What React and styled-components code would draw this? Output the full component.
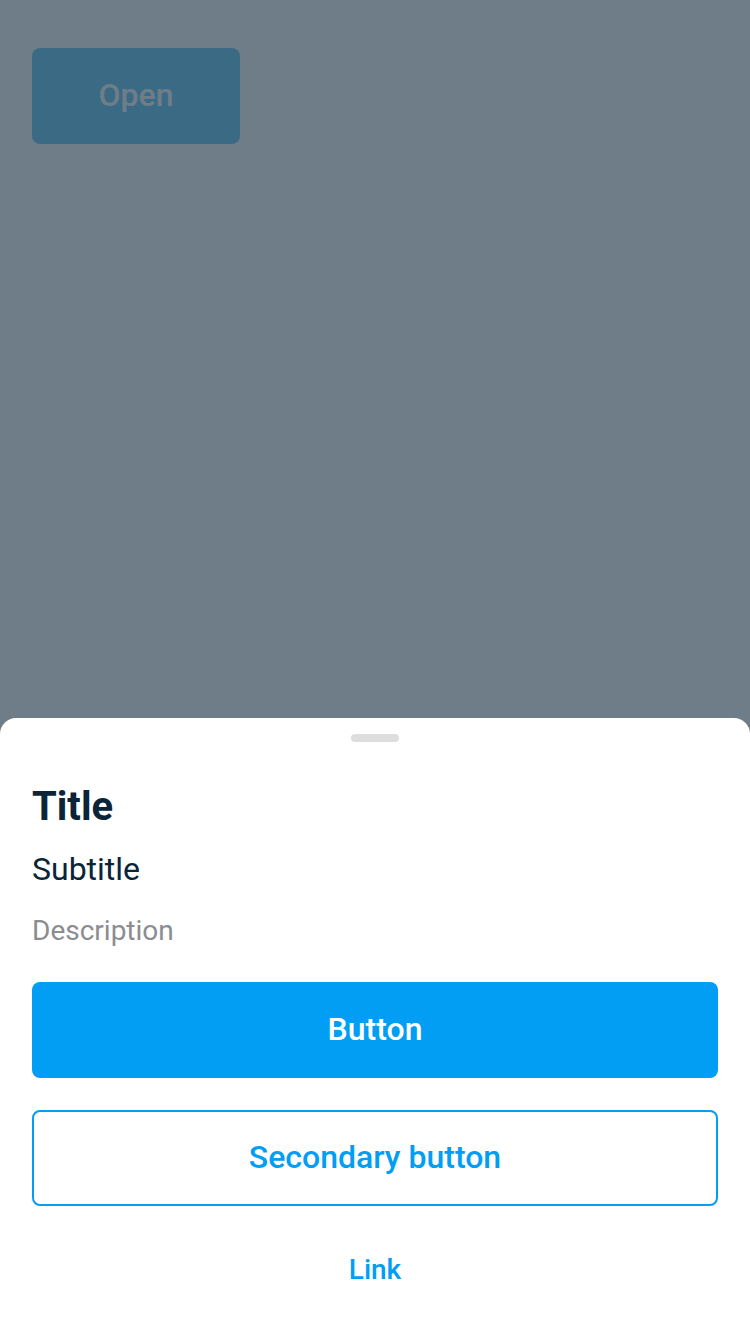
import styled, { createGlobalStyle } from "styled-components";

const GlobalStyle = createGlobalStyle`
  html, body {
    margin: 0;
    padding: 0;
    background: #ffffff;
    font-family: Roboto, "Noto Sans", sans-serif;
  }
  * {
    box-sizing: border-box;
  }
`;

export default function App() {
  return (
    <>
      <GlobalStyle />
      <Page>
        <OpenButton type="button">Open</OpenButton>
      </Page>

      <Overlay />

      <Sheet>
        <Handle />
        <Title>Title</Title>
        <Subtitle>Subtitle</Subtitle>
        <Description>Description</Description>

        <Actions>
          <PrimaryButton type="button">Button</PrimaryButton>
          <SecondaryButton type="button">Secondary button</SecondaryButton>
          <LinkButton type="button">Link</LinkButton>
        </Actions>
      </Sheet>
    </>
  );
}

const Page = styled.div`
  min-height: 100vh;
  padding: 48px 32px;
  background: #ffffff;
`;

const OpenButton = styled.button`
  width: 208px;
  height: 96px;
  padding: 0 0 2px;
  border: none;
  border-radius: 8px;
  background-color: #019ef4;
  color: #ffffff;
  font-family: Roboto, sans-serif;
  font-size: 32px;
  font-weight: 500;
  cursor: pointer;
`;

const Overlay = styled.div`
  position: fixed;
  inset: 0;
  background-color: rgba(74, 92, 105, 0.8);
`;

const Sheet = styled.div`
  position: fixed;
  left: 0;
  right: 0;
  bottom: 0;
  display: flex;
  flex-direction: column;
  padding: 16px 32px 32px;
  background-color: #ffffff;
  border-radius: 16px 16px 0 0;
`;

const Handle = styled.div`
  align-self: center;
  width: 48px;
  height: 8px;
  border-radius: 4px;
  background-color: #dddddd;
  margin-bottom: 41px;
`;

const Title = styled.h1`
  margin: 0 0 18px;
  font-size: 40px;
  line-height: 48px;
  font-weight: 700;
  color: #0b2438;
`;

const Subtitle = styled.h2`
  margin: 0 0 24px;
  font-size: 32px;
  line-height: 40px;
  font-weight: 400;
  color: #0b2438;
`;

const Description = styled.p`
  margin: 0 0 33px;
  font-size: 28px;
  line-height: 36px;
  font-weight: 400;
  color: #8a8d91;
`;

const Actions = styled.div`
  display: flex;
  flex-direction: column;
  gap: 32px;
`;

const PrimaryButton = styled.button`
  height: 96px;
  width: 100%;
  padding: 0 0 2px;
  border: none;
  border-radius: 8px;
  background-color: #019ef4;
  color: #ffffff;
  font-family: Roboto, sans-serif;
  font-size: 32px;
  font-weight: 500;
  cursor: pointer;
`;

const SecondaryButton = styled.button`
  height: 96px;
  width: 100%;
  padding: 0 0 2px;
  border: 2px solid #019ef4;
  border-radius: 8px;
  background-color: #ffffff;
  color: #019ef4;
  font-family: Roboto, sans-serif;
  font-size: 32px;
  font-weight: 500;
  cursor: pointer;
`;

const LinkButton = styled.button`
  height: 64px;
  width: 100%;
  border: none;
  background: none;
  padding: 0;
  color: #019ef4;
  font-family: Roboto, sans-serif;
  font-size: 28px;
  line-height: 64px;
  font-weight: 500;
  cursor: pointer;
`;
